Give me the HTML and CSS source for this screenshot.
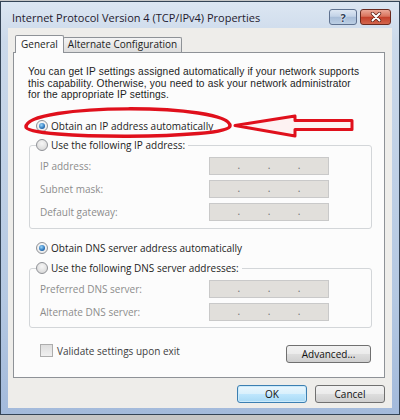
FILE: index.html
```html
<!DOCTYPE html>
<html lang="en">
<head>
    <meta charset="UTF-8">
    <title>Internet Protocol Version 4 (TCP/IPv4) Properties</title>
    <link rel="stylesheet" href="styles.css">
</head>
<body>
    <div class="window">
        <div class="titlebar">
            <span class="title">Internet Protocol Version 4 (TCP/IPv4) Properties</span>
            <div class="caption">
                <span class="cap-btn help">?</span>
                <span class="cap-btn close">
                    <svg width="12" height="10" viewBox="0 0 12 10">
                        <path d="M2.5 1.5 L9.5 8.5 M9.5 1.5 L2.5 8.5" stroke="#5a1e14" stroke-width="3.4" stroke-linecap="round"/>
                        <path d="M2.5 1.5 L9.5 8.5 M9.5 1.5 L2.5 8.5" stroke="#ffffff" stroke-width="2" stroke-linecap="round"/>
                    </svg>
                </span>
            </div>
        </div>

        <div class="client">
            <div class="tabs">
                <div class="tab active">General</div>
                <div class="tab">Alternate Configuration</div>
            </div>

            <div class="panel">
                <p class="intro">You can get IP settings assigned automatically if your network supports<br>this capability. Otherwise, you need to ask your network administrator<br>for the appropriate IP settings.</p>

                <div class="option ip-auto"><span class="radio checked"></span>Obtain an IP address automatically</div>

                <fieldset class="group ip-group">
                    <legend><span class="radio"></span>Use the following IP address:</legend>
                    <div class="fields">
                        <label>IP address:</label>
                        <div class="ip"><span>.</span><span>.</span><span>.</span></div>
                        <label>Subnet mask:</label>
                        <div class="ip"><span>.</span><span>.</span><span>.</span></div>
                        <label>Default gateway:</label>
                        <div class="ip"><span>.</span><span>.</span><span>.</span></div>
                    </div>
                </fieldset>

                <div class="option dns-auto"><span class="radio checked"></span>Obtain DNS server address automatically</div>

                <fieldset class="group dns-group">
                    <legend><span class="radio"></span>Use the following DNS server addresses:</legend>
                    <div class="fields">
                        <label>Preferred DNS server:</label>
                        <div class="ip"><span>.</span><span>.</span><span>.</span></div>
                        <label>Alternate DNS server:</label>
                        <div class="ip"><span>.</span><span>.</span><span>.</span></div>
                    </div>
                </fieldset>

                <div class="footer-row">
                    <div class="check"><span class="box"></span>Validate settings upon exit</div>
                    <button class="btn advanced">Advanced...</button>
                </div>
            </div>

            <div class="actions">
                <button class="btn default">OK</button>
                <button class="btn">Cancel</button>
            </div>
        </div>
    </div>

    <!-- red markup drawn over the screenshot -->
    <svg class="markup" width="400" height="420" viewBox="0 0 400 420">
        <path d="M26 127 C26 103 230 103 230 126 C230 139.5 26 139.5 26 127 Z" fill="none" stroke="#e0101c" stroke-width="3.5"/>
        <polygon points="235,125.5 295,116 295,120.5 352,120.5 352,129.5 295,129.5 295,136" fill="#fdf2f2" stroke="#e0101c" stroke-width="3" stroke-linejoin="round"/>
    </svg>
</body>
</html>
```

FILE: styles.css
```css
/* Global styles */
* {
    box-sizing: border-box;
}

body {
    margin: 0;
    width: 400px;
    height: 420px;
    overflow: hidden;
    position: relative;
    background-color: #c6c6c6;
    font-family: "Open Sans", "Liberation Sans", sans-serif;
    font-size: 10px;
    color: #1c1c1c;
}

/* Window frame */
.window {
    margin-top: 1px;
    width: 400px;
    height: 414px;
    border: 1px solid #344456;
    background: linear-gradient(#dce6f2, #cbd9ea 40px, #b4c8e2 300px, #a3badb);
    padding: 0 7px 6px 7px;
}

.titlebar {
    height: 26px;
    padding-top: 4px;
    display: flex;
    align-items: center;
    justify-content: space-between;
}

.title {
    margin-left: 4px;
    font-size: 11px;
    color: #1f1a2e;
}

.caption {
    display: flex;
    gap: 3px;
    margin-right: 1px;
}

.cap-btn {
    height: 16px;
    border-radius: 3px;
    border: 1px solid #5f7290;
    display: flex;
    align-items: center;
    justify-content: center;
}

.help {
    width: 28px;
    background: linear-gradient(#dde7f3, #c3d3e7 45%, #a8bdd8 52%, #bccfe4);
    font-weight: bold;
    font-size: 11px;
    color: #2b3c55;
    text-shadow: 0 0 2px #ffffff, 0 0 1px #ffffff;
}

.close {
    width: 31px;
    border-color: #6b2a1f;
    background: linear-gradient(#eba897, #d9735d 45%, #c4412b 52%, #d3664d);
}

/* Dialog body */
.client {
    height: 380px;
    background-color: #eeedea;
    padding: 7px 7px 0 5px;
}

.tabs {
    display: flex;
    align-items: flex-end;
    height: 17px;
    padding-left: 2px;
}

.tab {
    height: 15px;
    width: 119px;
    margin-left: -1px;
    border: 1px solid #8e9297;
    border-bottom: 0;
    border-radius: 2px 2px 0 0;
    background: linear-gradient(#f4f4f4, #e8e8e8 50%, #dddddd);
    text-align: center;
    line-height: 13px;
}

.tab.active {
    height: 18px;
    width: 49px;
    margin-left: 0;
    margin-bottom: -1px;
    background: #fcfcfc;
    line-height: 16px;
    position: relative;
    z-index: 1;
}

.panel {
    height: 326px;
    border: 1px solid #8e9297;
    background-color: #fcfcfc;
    padding: 13px 12px 0 14px;
}

/* tight Windows line spacing; this face fits inside it */
.intro {
    margin: 0;
    font-family: "Liberation Sans", Arial, sans-serif;
    font-size: 10.2px;
    letter-spacing: 0.15px;
    line-height: 11.5px;
}

.option {
    display: flex;
    align-items: center;
    gap: 3px;
    height: 14px;
    line-height: 14px;
    margin-left: 8px;
    white-space: nowrap;
}

.ip-auto {
    margin-top: 18.5px;
}

.dns-auto {
    margin-top: 12px;
}

.radio {
    flex: none;
    width: 12px;
    height: 12px;
    border-radius: 50%;
    border: 1px solid #8f9196;
    background: radial-gradient(circle at 50% 35%, #f6f6f6, #d2d2d2);
    display: flex;
    align-items: center;
    justify-content: center;
}

.radio.checked {
    background: radial-gradient(circle at 50% 40%, #ffffff, #e4e4e4);
}

.radio.checked::after {
    content: "";
    width: 6px;
    height: 6px;
    border-radius: 50%;
    background: radial-gradient(circle at 40% 35%, #9ad6fa, #2b74ba 60%, #143f73);
}

/* Group boxes */
.group {
    margin: 5px 0 0 1px;
    padding: 0 42px 7px 10px;
    min-width: 0;
    border: 1px solid #d3d6d9;
    border-radius: 3px;
}

.dns-group {
    margin-top: 6px;
    padding-bottom: 6px;
}

.group legend {
    display: flex;
    align-items: center;
    gap: 3px;
    height: 14px;
    line-height: 14px;
    margin-left: -4px;
    padding: 0 3px 0 0;
    white-space: nowrap;
}

.fields {
    display: grid;
    grid-template-columns: 1fr 120px;
    row-gap: 5px;
    align-items: center;
    padding-top: 5px;
}

.fields label {
    color: #8c8c8c;
}

.ip {
    height: 18px;
    border: 1px solid #c9c9c9;
    background-color: #e1dfdb;
    display: flex;
    justify-content: space-evenly;
    line-height: 15px;
    color: #6e6e6e;
}

/* Bottom of the tab */
.footer-row {
    display: flex;
    justify-content: space-between;
    align-items: flex-start;
    margin-top: 17px;
    padding: 0 1px 0 12px;
}

.check {
    display: flex;
    align-items: center;
    gap: 4px;
    height: 13px;
    margin-top: -1px;
    color: #3e3e3e;
}

.box {
    width: 13px;
    height: 13px;
    border: 1px solid #adadad;
    background: linear-gradient(#dedede, #f0f0f0);
}

.btn {
    font: inherit;
    color: #111111;
    height: 18px;
    padding: 0;
    line-height: 16px;
    border: 1px solid #707070;
    border-radius: 3px;
    background: linear-gradient(#f2f2f2, #ebebeb 48%, #dddddd 52%, #cfcfcf);
}

.advanced {
    width: 85px;
}

.actions {
    display: flex;
    justify-content: flex-end;
    gap: 8px;
    margin-top: 7px;
}

.actions .btn {
    width: 70px;
}

.btn.default {
    border-color: #3c7fb1;
    background: linear-gradient(#eaf6fd, #d9f0fc 48%, #bee6fd 52%, #a7d9f5);
    box-shadow: inset 0 0 0 1px #cbeafb;
}

/* Annotation layer */
.markup {
    position: absolute;
    top: 0;
    left: 0;
    pointer-events: none;
}
```
